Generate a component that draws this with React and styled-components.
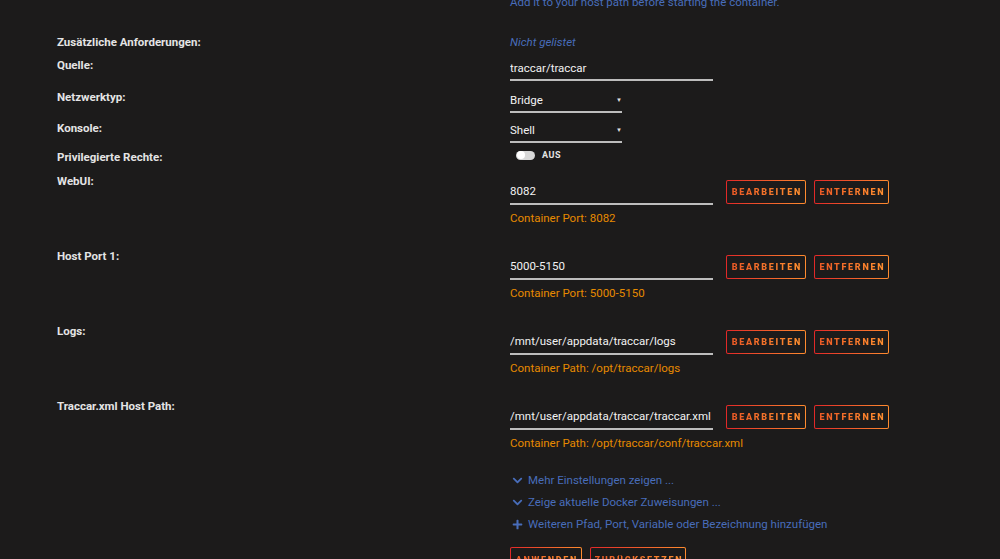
import styled, { createGlobalStyle } from 'styled-components'
import { FaChevronDown, FaPlus } from 'react-icons/fa'

const GlobalStyle = createGlobalStyle`
    html, body {
        margin: 0;
        padding: 0;
        background: #1c1b1b;
        overflow: hidden;
    }
    body {
        font-family: Roboto, "Noto Sans", sans-serif;
        font-size: 11.5px;
        color: #f2f2f2;
    }
`;

const Page = styled.div`
    height: 559px;
    overflow: hidden;
    padding-left: 57px;
`;

const Hint = styled.div`
    margin: -8px 0 20px 453px;
    line-height: 20px;
    color: #486dba;
`;

const Row = styled.div`
    display: grid;
    grid-template-columns: 453px 1fr;
    align-items: start;
    height: ${p => p.$h}px;
`;

const Label = styled.div`
    font-weight: 700;
    line-height: 20px;
    color: #e4e4e4;
`;

const Value = styled.div`
    display: flex;
    flex-direction: column;
    align-items: flex-start;
`;

const Muted = styled.div`
    line-height: 20px;
    color: #486dba;
    font-style: italic;
`;

const Field = styled.div`
    width: ${p => p.$w || 203}px;
    box-sizing: border-box;
    padding: ${p => p.$top || 3}px 0 ${p => p.$bottom || 1}px;
    line-height: 20px;
    border-bottom: 2px solid #bdbdbd;
    color: #f2f2f2;
    white-space: nowrap;
    overflow: hidden;
    display: flex;
    justify-content: space-between;
    align-items: center;
`;

const Arrow = styled.span`
    font-size: 6px;
    color: #e0e0e0;
`;

const ToggleWrap = styled.div`
    display: flex;
    align-items: center;
    gap: 7px;
    padding: 0 0 0 6px;
    height: 16px;
`;

const Track = styled.div`
    width: 19px;
    height: 9px;
    border-radius: 5px;
    background: #d8d8d8;
    display: flex;
    align-items: center;
    padding: 0 1px;
    box-sizing: border-box;
`;

const Knob = styled.div`
    width: 8px;
    height: 8px;
    border-radius: 50%;
    background: #ffffff;
`;

const ToggleText = styled.span`
    font-size: 9px;
    font-weight: 700;
    letter-spacing: 0.5px;
    color: #e4e4e4;
`;

const Line = styled.div`
    display: flex;
    align-items: flex-start;
`;

const Actions = styled.div`
    display: flex;
    gap: 8px;
    margin-left: 13px;
    padding-top: 9px;
`;

const GradButton = styled.button`
    width: ${p => p.$w}px;
    height: ${p => p.$h || 24}px;
    padding: 0;
    border: 1px solid transparent;
    border-radius: 2px;
    background:
        linear-gradient(#1c1b1b, #1c1b1b) padding-box,
        linear-gradient(90deg, #e22828, #ff8c2f) border-box;
    font-family: Roboto, "Noto Sans", sans-serif;
    cursor: pointer;
    display: flex;
    align-items: center;
    justify-content: center;
`;

const GradText = styled.span`
    font-size: 9px;
    font-weight: 900;
    letter-spacing: 1.7px;
    margin-right: -1.7px;
    background: linear-gradient(90deg, #ec5a26, #ff8f2f);
    -webkit-background-clip: text;
    background-clip: text;
    color: transparent;
`;

const Desc = styled.div`
    margin-top: 3px;
    line-height: 20px;
    color: #e68a00;
`;

const Links = styled.div`
    margin: -2px 0 0 453px;
    display: flex;
    flex-direction: column;
`;

const LinkRow = styled.a`
    display: flex;
    align-items: center;
    gap: 5px;
    line-height: 22px;
    color: #486dba;
    text-decoration: none;
    cursor: pointer;
    svg {
        width: 11px;
        height: 11px;
        margin-left: 2px;
    }
`;

const Footer = styled.div`
    display: flex;
    gap: 8px;
    margin: 12px 0 0 453px;
`;

const paths = [
    { label: 'WebUI:', value: '8082', desc: 'Container Port: 8082' },
    { label: 'Host Port 1:', value: '5000-5150', desc: 'Container Port: 5000-5150' },
    { label: 'Logs:', value: '/mnt/user/appdata/traccar/logs', desc: 'Container Path: /opt/traccar/logs' },
    { label: 'Traccar.xml Host Path:', value: '/mnt/user/appdata/traccar/traccar.xml', desc: 'Container Path: /opt/traccar/conf/traccar.xml' },
];

const links = [
    { icon: <FaChevronDown />, text: 'Mehr Einstellungen zeigen ...' },
    { icon: <FaChevronDown />, text: 'Zeige aktuelle Docker Zuweisungen ...' },
    { icon: <FaPlus />, text: 'Weiteren Pfad, Port, Variable oder Bezeichnung hinzufügen' },
];

const App = () => {
    return (
        <>
            <GlobalStyle />
            <Page>
                <Hint>Add it to your host path before starting the container.</Hint>

                <Row $h={23}>
                    <Label>Zusätzliche Anforderungen:</Label>
                    <Muted>Nicht gelistet</Muted>
                </Row>
                <Row $h={32}>
                    <Label>Quelle:</Label>
                    <Value>
                        <Field>traccar/traccar</Field>
                    </Value>
                </Row>
                <Row $h={31}>
                    <Label>Netzwerktyp:</Label>
                    <Value>
                        <Field $w={112} $top={3} $bottom={0}>Bridge<Arrow>▼</Arrow></Field>
                    </Value>
                </Row>
                <Row $h={29}>
                    <Label>Konsole:</Label>
                    <Value>
                        <Field $w={112} $top={2} $bottom={1}>Shell<Arrow>▼</Arrow></Field>
                    </Value>
                </Row>
                <Row $h={24}>
                    <Label>Privilegierte Rechte:</Label>
                    <ToggleWrap>
                        <Track><Knob /></Track>
                        <ToggleText>AUS</ToggleText>
                    </ToggleWrap>
                </Row>

                {paths.map(p => (
                    <Row key={p.label} $h={75}>
                        <Label>{p.label}</Label>
                        <Value>
                            <Line>
                                <Field $top={10} $bottom={2}>{p.value}</Field>
                                <Actions>
                                    <GradButton $w={80}><GradText>BEARBEITEN</GradText></GradButton>
                                    <GradButton $w={75}><GradText>ENTFERNEN</GradText></GradButton>
                                </Actions>
                            </Line>
                            <Desc>{p.desc}</Desc>
                        </Value>
                    </Row>
                ))}

                <Links>
                    {links.map(l => (
                        <LinkRow key={l.text}>{l.icon}{l.text}</LinkRow>
                    ))}
                </Links>

                <Footer>
                    <GradButton $w={72} $h={26}><GradText>ANWENDEN</GradText></GradButton>
                    <GradButton $w={96} $h={26}><GradText>ZURÜCKSETZEN</GradText></GradButton>
                </Footer>
            </Page>
        </>
    )
}

export default App
